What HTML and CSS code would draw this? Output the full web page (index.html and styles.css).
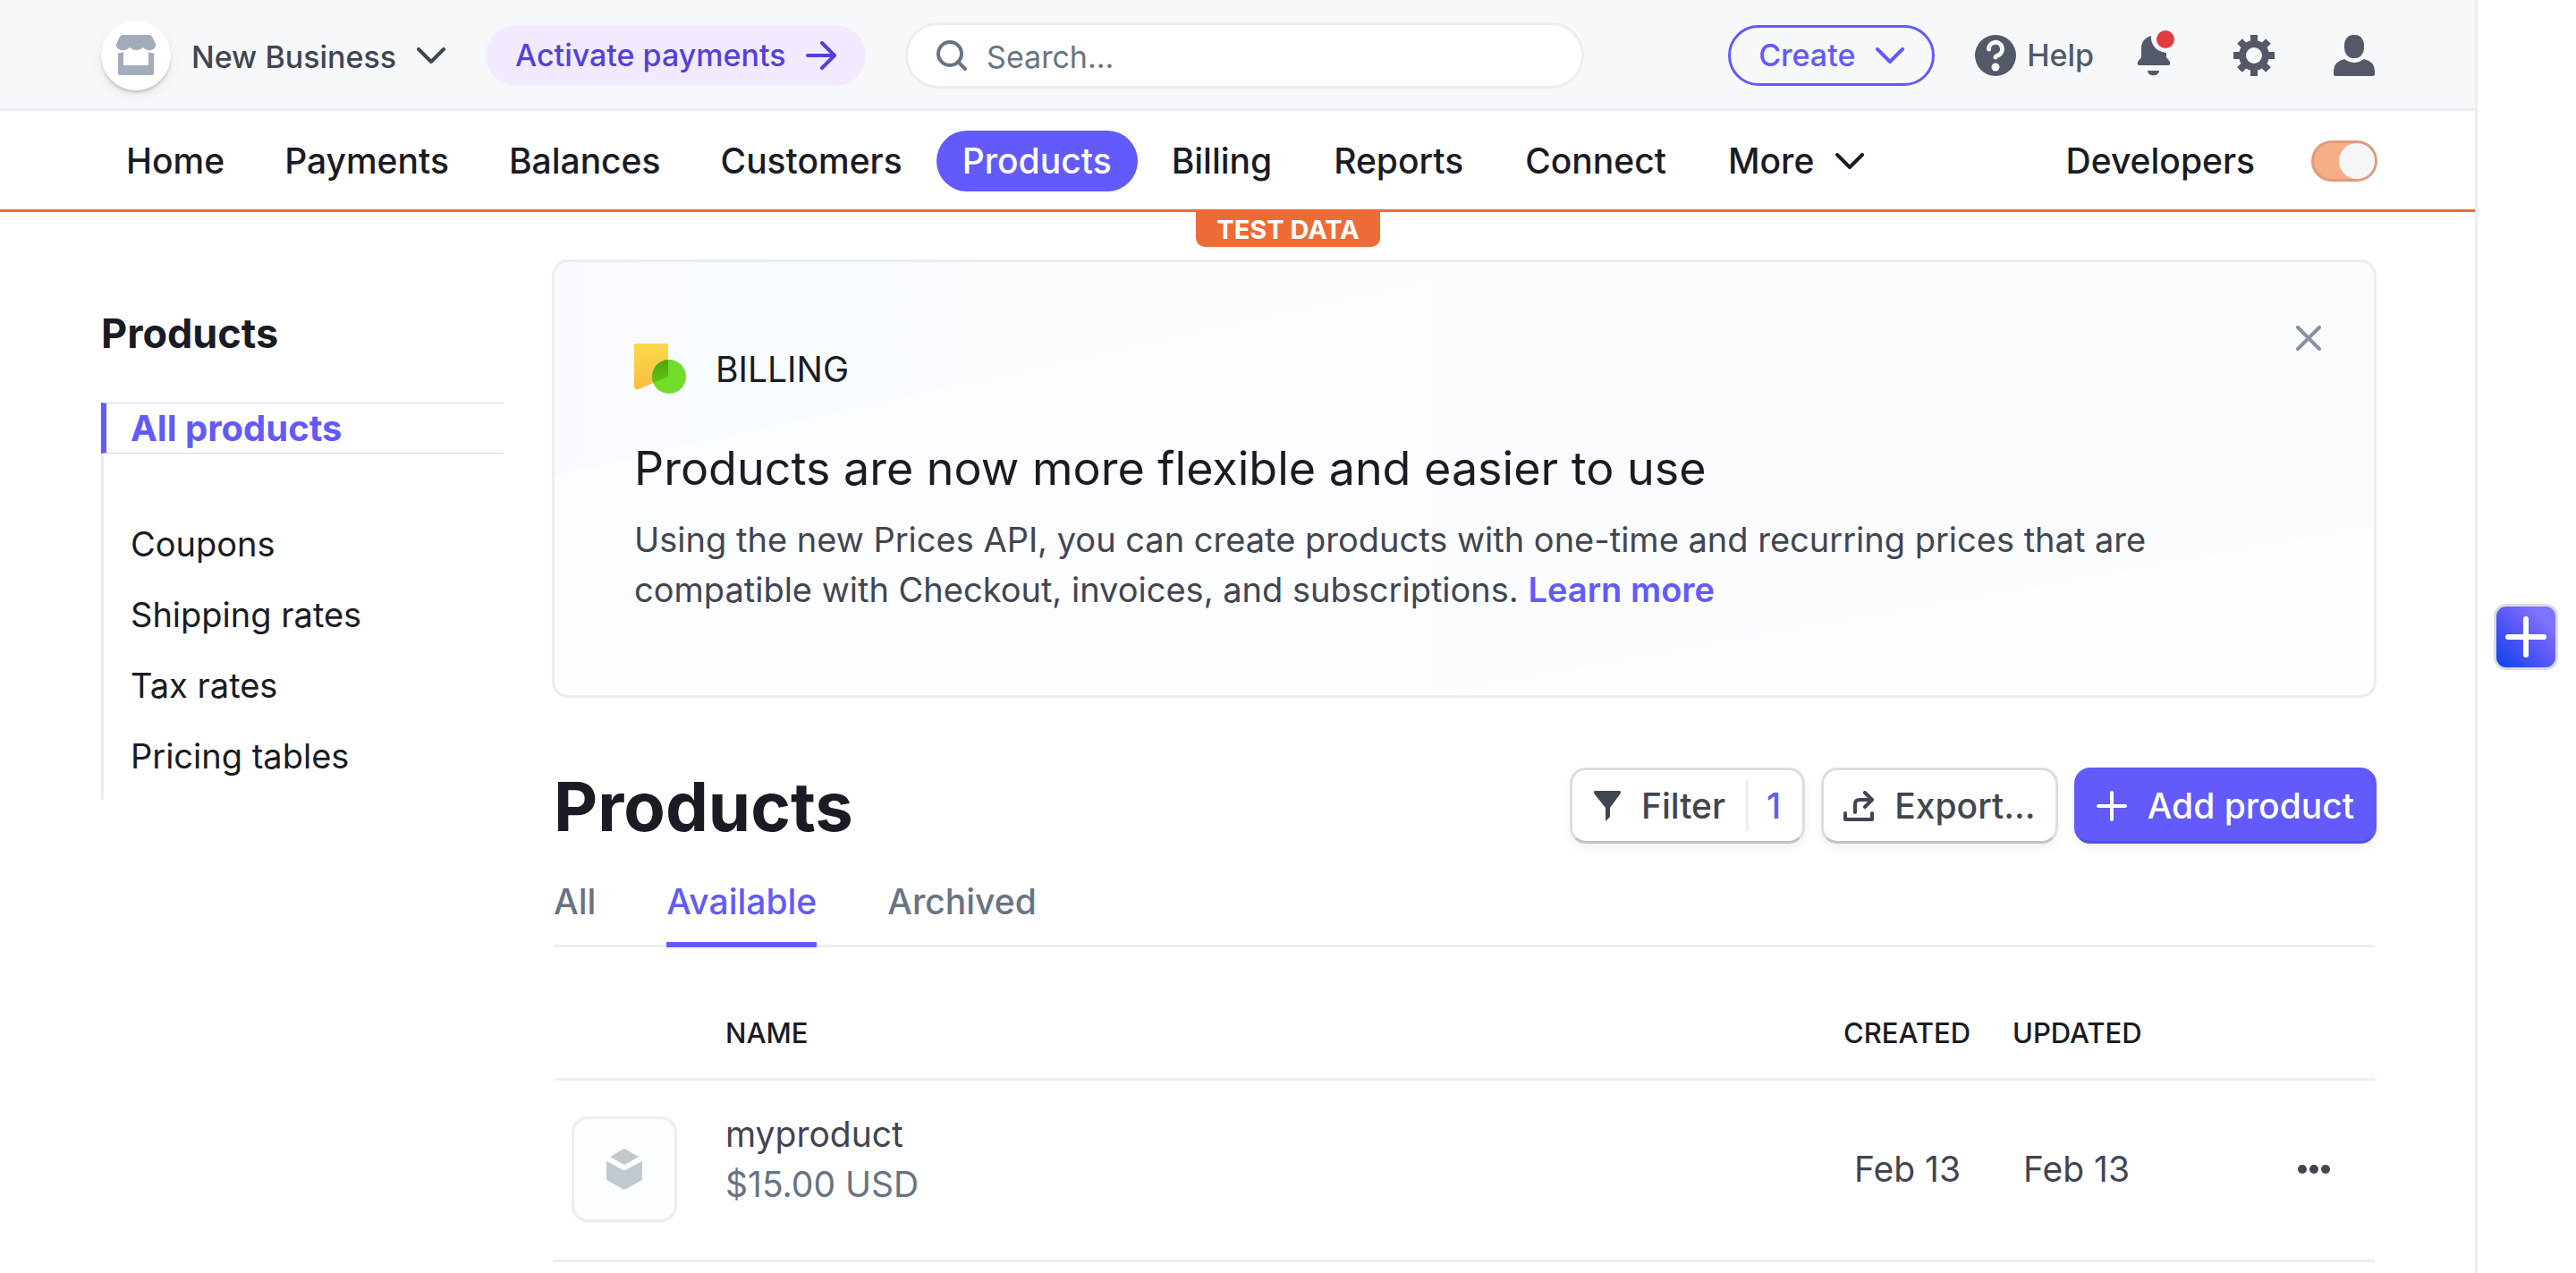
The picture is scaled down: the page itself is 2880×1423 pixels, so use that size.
FILE: index.html
```html
<!DOCTYPE html>
<html lang="en">
<head>
<meta charset="utf-8">
<title>Products</title>
<link rel="stylesheet" href="styles.css">
</head>
<body>
<div class="shell">
  <div class="app">
    <header class="topbar">
      <button class="account" type="button">
        <span class="avatar">
          <svg width="46" height="46" viewBox="0 0 46 46"><path d="M8 0h30q2 0 3 2l4 8c1 7-8 10-14 4-4 4-11 4-15 0C10 20 0 17 1 10L5 2q1-2 3-2z"/><path d="M3 20q3 1 6-1v15h28V19q3 2 6 1v23q0 2-2 2H5q-2 0-2-2z"/></svg>
        </span>
        <span class="account-name">New Business</span>
        <svg class="stroke" width="32" height="18" viewBox="0 0 32 18"><path d="M2 2l14 14L30 2"/></svg>
      </button>
      <a class="activate" href="#"><span>Activate payments</span>
        <svg class="stroke" width="34" height="32" viewBox="0 0 34 32"><path d="M2 16h30M18 2l14 14-14 14"/></svg>
      </a>
      <label class="search">
        <svg class="stroke" width="34" height="34" viewBox="0 0 34 34"><circle cx="15" cy="15" r="13"/><path d="M24 24l8 8"/></svg>
        <input type="text" placeholder="Search..." aria-label="Search">
      </label>
      <button class="create" type="button"><span>Create</span>
        <svg class="stroke" width="32" height="18" viewBox="0 0 32 18"><path d="M2 2l14 14L30 2"/></svg>
      </button>
      <a class="help" href="#">
        <svg width="46" height="46" viewBox="0 0 46 46"><circle cx="23" cy="23" r="23"/><path d="M15.500 16a7.500 7.500 0 1 1 11 6.500q-3.500 1.500-3.500 2.500" fill="none" stroke="#f6f8fa" stroke-width="5" stroke-linecap="round"/><circle cx="23" cy="36" r="4.500" fill="#f6f8fa"/></svg>
        <span>Help</span>
      </a>
      <button class="bell" type="button" aria-label="Notifications">
        <svg width="42" height="54" viewBox="0 0 42 54"><path d="M16 7C9 9 5 14 5 21v10l-4 5q-1 4 2 4h32q3 0 2-4l-4-5v-5C23 25 15 18 16 7zM12 46h13c0 7-13 7-13 0z"/><circle cx="32" cy="11" r="10" fill="#e03b41"/></svg>
      </button>
      <button class="gear" type="button" aria-label="Settings">
        <svg width="46" height="46" viewBox="0 0 46 46"><g fill="none" stroke="currentColor" stroke-width="8"><circle cx="23" cy="23" r="13"/><path d="M23 0v8M23 38v8M0 23h8M38 23h8M7 7l6 6M33 33l6 6M39 7l-6 6M13 33l-6 6"/></g></svg>
      </button>
      <button class="person" type="button" aria-label="Profile">
        <svg width="46" height="46" viewBox="0 0 46 46"><rect x="12" y="0" width="22" height="26" rx="10" ry="11"/><path d="M12 27q11 8 22 0 12 3 12 13v4q0 2-2 2H2q-2 0-2-2v-4q0-10 12-13z"/></svg>
      </button>
    </header>

    <nav class="nav">
      <a href="#">Home</a>
      <a href="#">Payments</a>
      <a href="#">Balances</a>
      <a href="#">Customers</a>
      <a class="current" href="#">Products</a>
      <a href="#">Billing</a>
      <a href="#">Reports</a>
      <a href="#">Connect</a>
      <a href="#">More
        <svg class="stroke" width="32" height="18" viewBox="0 0 32 18"><path d="M2 2l14 14L30 2"/></svg>
      </a>
      <a class="developers" href="#">Developers</a>
      <input class="toggle" type="checkbox" checked aria-label="Test mode">
      <span class="test-data">TEST DATA</span>
    </nav>

    <div class="content">
      <aside class="sidebar">
        <h2>Products</h2>
        <ul>
          <li class="selected"><a href="#">All products</a></li>
          <li><a href="#">Coupons</a></li>
          <li><a href="#">Shipping rates</a></li>
          <li><a href="#">Tax rates</a></li>
          <li><a href="#">Pricing tables</a></li>
        </ul>
      </aside>

      <main class="main">
        <section class="banner">
          <svg class="banner-art" viewBox="0 0 2034 484" preserveAspectRatio="none" aria-hidden="true">
            <defs><linearGradient id="wash" x1="0" x2="1" y1="0" y2="0"><stop offset="0" stop-color="#f9fafe"/><stop offset=".25" stop-color="#f8fcff"/><stop offset=".48" stop-color="#fafcfe"/></linearGradient></defs>
            <path d="M0 0h2034v484H0z" fill="#fcfdff"/>
            <path d="M0 0h984v18L0 238z" fill="url(#wash)"/>
            <path d="M984 0h1050v295L984 484z" fill="#fafcfe"/>
            <path d="M2034 295v189H984z" fill="#fefeff"/>
          </svg>
          <div class="banner-label">
            <svg width="58" height="58" viewBox="0 0 58 58">
              <defs><linearGradient id="sheet" x2="0" y2="1"><stop stop-color="#fbd84a"/><stop offset="1" stop-color="#fabd42"/></linearGradient><linearGradient id="overlap" x2="0" y2="1"><stop stop-color="#4fa308"/><stop offset="1" stop-color="#6ed023"/></linearGradient><clipPath id="sheet-clip"><path d="M2 0h34q2 0 2 2v35L5 51q-5 1-5-4V2q0-2 2-2z"/></clipPath></defs>
              <path d="M2 0h34q2 0 2 2v35L5 51q-5 1-5-4V2q0-2 2-2z" fill="url(#sheet)"/><circle cx="39" cy="37" r="19" fill="#72dc2b"/><circle cx="39" cy="37" r="19" fill="url(#overlap)" clip-path="url(#sheet-clip)"/>
            </svg>
            <span>BILLING</span>
          </div>
          <h3>Products are now more flexible and easier to use</h3>
          <p>Using the new Prices API, you can create products with one-time and recurring prices that are compatible with Checkout, invoices, and subscriptions. <a href="#">Learn more</a></p>
          <button class="close" type="button" aria-label="Dismiss">
            <svg class="stroke" width="28" height="28" viewBox="0 0 28 28"><path d="M2 2l24 24M26 2L2 26"/></svg>
          </button>
        </section>

        <div class="heading">
          <h1>Products</h1>
          <button class="btn" type="button">
            <svg width="32" height="34" viewBox="0 0 32 34"><path d="M3 0h28q2 1 0 4L20 19v10l-5 5V19L3 4q-2-3 0-4z"/></svg>
            <span>Filter</span><span class="count">1</span>
          </button>
          <button class="btn" type="button">
            <svg class="stroke" width="34" height="34" viewBox="0 0 34 34"><path d="M2 25v7h30v-7M13 24v-9q0-5 5-5h13M24 2l8 8-8 8"/></svg>
            <span>Export...</span>
          </button>
          <button class="btn primary" type="button">
            <svg class="stroke" width="34" height="34" viewBox="0 0 34 34"><path d="M17 2v30M2 17h30"/></svg>
            <span>Add product</span>
          </button>
        </div>

        <div class="tabs">
          <a href="#">All</a>
          <a class="active" href="#">Available</a>
          <a href="#">Archived</a>
        </div>

        <div class="listing">
          <table class="products">
            <colgroup><col class="c-thumb"><col><col class="c-date"><col class="c-date"><col class="c-more"></colgroup>
            <thead>
              <tr><th></th><th>NAME</th><th>CREATED</th><th>UPDATED</th><th></th></tr>
            </thead>
            <tbody>
              <tr>
                <td><span class="thumb"><svg width="40" height="46" viewBox="0 0 40 46"><path d="M18 1q2-1 4 0l14 8-14 8q-2 1-4 0L4 9z"/><path d="M0 14l17 9q3 2 6 0l17-9v19q0 2-2 3L22 45q-2 1-4 0L2 36q-2-1-2-3z"/></svg></span></td>
                <td class="name"><div>myproduct</div><div class="price">$15.00 USD</div></td>
                <td class="date">Feb 13</td>
                <td class="date">Feb 13</td>
                <td><button class="more" type="button" aria-label="More actions"><svg width="36" height="10" viewBox="0 0 36 10"><circle cx="5" cy="5" r="5"/><circle cx="18" cy="5" r="5"/><circle cx="31" cy="5" r="5"/></svg></button></td>
              </tr>
            </tbody>
          </table>
        </div>
      </main>
    </div>
  </div>
  <aside class="rail">
    <button type="button" aria-label="Add">
      <svg width="46" height="46" viewBox="0 0 46 46"><path d="M23 3v40M3 23h40"/></svg>
    </button>
  </aside>
</div>
</body>
</html>
```
FILE: styles.css
```css
* { box-sizing: border-box; }
body {
  margin: 0;
  background: #fff;
  color: #1a1b25;
  font: 400 39px/56px Inter, "Liberation Sans", sans-serif;
}
a { color: inherit; text-decoration: none; }
button { font: inherit; color: inherit; background: none; border: 0; padding: 0; display: flex; align-items: center; }
h1, h2, h3, p, ul { margin: 0; padding: 0; }
ul { list-style: none; }
svg { display: block; flex: none; fill: currentColor; }
svg.stroke { fill: none; stroke: currentColor; stroke-width: 4; stroke-linecap: round; stroke-linejoin: round; }

.shell { display: flex; min-height: 100vh; }
.app { flex: 1; min-width: 0; border-right: 3px solid #ebeef1; }

.topbar {
  display: flex; align-items: center;
  height: 124px; padding: 3px 112px 0 113px;
  background: #f6f8fa; border-bottom: 3px solid #ebeef1;
  color: #535969; font-size: 34px; font-weight: 500;
}
.account { gap: 23px; color: #414552; }
.account-name { padding-top: 4px; }
.avatar {
  display: grid; place-items: center; width: 78px; height: 78px;
  border-radius: 50%; background: #fff; color: #a3acba;
  box-shadow: 0 3px 3px rgba(0,0,0,.14), 0 6px 14px rgba(0,0,0,.07);
}
.activate {
  display: flex; align-items: center; justify-content: space-between;
  width: 425px; height: 68px; margin-left: 45px; padding: 0 33px;
  border-radius: 34px; background: #f2ebff; color: #5340db;
}
.search {
  display: flex; align-items: center; gap: 22px;
  flex: 1; height: 74px; margin-left: 44px; padding: 0 32px;
  border: 3px solid #ebeef1; border-radius: 37px; background: #fff; color: #687385;
}
.search input { flex: 1; min-width: 0; border: 0; outline: 0; padding: 4px 0 0; background: none; font: inherit; font-weight: 400; color: inherit; }
.search input::placeholder { color: #687385; opacity: 1; }
.create {
  justify-content: space-between; width: 231px; height: 68px; margin-left: 161px; padding: 0 31px;
  border: 3px solid #625afa; border-radius: 34px; color: #625afa;
}
.help { display: flex; align-items: center; gap: 12px; margin-left: 45px; }
.bell { margin: 0 0 4px 48px; }
.gear, .person { margin-left: 66px; }

.nav {
  position: relative; display: flex; align-items: center;
  height: 113px; padding: 2px 109px 0 112px;
  border-bottom: 3px solid #ed6b36; font-weight: 500;
}
.nav a { display: flex; align-items: center; gap: 24px; height: 68px; margin-right: 9px; padding: 0 29px; border-radius: 34px; }
.nav .current { background: #625afa; color: #fff; }
.nav .current ~ a { margin-right: 11px; }
.nav .current ~ .developers { margin-left: auto; margin-right: 34px; }
.toggle {
  appearance: none; display: flex; justify-content: flex-end; width: 74px; height: 46px; margin: 0;
  border: 3px solid #e09a7e; border-radius: 23px; background: #f5ae85;
}
.toggle::before { content: ""; width: 40px; height: 40px; border-radius: 50%; background: #f5f6f8; }
.test-data {
  position: absolute; top: 100%; left: calc(50vw - 103px); width: 206px; height: 42px;
  border-radius: 0 0 10px 10px; background: #ed6b36; color: #fff;
  font-size: 29px; line-height: 46px; font-weight: 700; text-align: center;
}

.content { display: flex; gap: 54px; padding: 53px 110px 0 113px; }
.sidebar { width: 450px; padding-top: 55px; }
.sidebar h2 { font-size: 45px; line-height: 56px; font-weight: 700; }
.sidebar ul { margin-top: 49px; padding-bottom: 10px; border-left: 3px solid #ebeef1; font-size: 38px; }
.sidebar li { height: 79px; padding: 12px 0 11px 30px; }
.sidebar .selected {
  height: 57px; margin: 0 0 61px -3px; padding: 0 0 0 27px;
  border: solid #d6d2fb; border-width: 1px 0; border-left: 6px solid #625afa;
  color: #625afa; font-size: 40px; font-weight: 700;
}

.main { flex: 1; min-width: 0; }
.banner {
  position: relative; height: 490px; padding: 91px 200px 0 89px;
  border: 3px solid #ebeef1; border-radius: 18px; overflow: hidden; color: #414552;
}
.banner-art { position: absolute; inset: 0; width: 100%; height: 100%; z-index: -1; }
.banner-label { display: flex; align-items: center; gap: 33px; color: #1a1b25; }
.banner h3 { margin-top: 46px; font-size: 52px; line-height: 72px; font-weight: 400; color: #1a1b25; }
.banner p { margin-top: 15px; font-size: 38px; }
.banner p a { color: #625afa; font-weight: 600; }
.close { position: absolute; top: 71px; right: 59px; color: #8792a2; }

.heading { display: flex; align-items: center; gap: 18px; margin-top: 78px; padding-left: 2px; }
.heading h1 { flex: 1; font-size: 76px; line-height: 84px; font-weight: 700; }
.btn {
  gap: 23px; height: 85px; padding: 0 22px; border: 3px solid #dcdde0; border-bottom-color: #c2c3c6;
  border-radius: 18px; color: #414552; font-weight: 500; box-shadow: 0 5px 10px rgba(0,0,0,.06);
}
.btn .count { height: 56px; padding: 0 2px 0 20px; border-left: 3px solid #ebeef1; color: #625afa; }
.btn.primary { border-color: #625afa; border-bottom-color: #564fdc; background: #625afa; color: #fff; }

.tabs { display: flex; gap: 79px; margin: 37px 2px 0; border-bottom: 3px solid #ebeef1; color: #687385; font-weight: 500; }
.tabs a { height: 76px; line-height: 56px; }
.tabs .active { margin-bottom: -3px; height: 79px; border-bottom: 6px solid #625afa; color: #625afa; }

.listing { padding: 0 2px; }
.products { width: 100%; table-layout: fixed; border-collapse: separate; border-spacing: 0; color: #414552; }
.c-thumb { width: 192px; }
.c-date { width: 189px; }
.c-more { width: 216px; }
.products th, .products td { padding: 0; text-align: left; border-bottom: 3px solid #ebeef1; }
.products th { height: 149px; padding-top: 46px; font-size: 31px; font-weight: 500; color: #1a1b25; }
.products td { height: 203px; padding-bottom: 2px; }
.products .name { padding-bottom: 24px; }
.price { color: #687385; }
.products .date { padding-left: 12px; }
.thumb { display: grid; place-items: center; width: 118px; height: 118px; margin-left: 20px; border: 3px solid #ebeef1; border-radius: 18px; background: #fcfdff; color: #c0c8d2; }
.more { margin-left: 130px; }

.rail { display: flex; align-items: center; justify-content: center; width: 110px; padding-right: 2px; }
.rail button {
  justify-content: center; width: 72px; height: 74px; border: 3px solid #d8dce3; border-radius: 14px;
  background: linear-gradient(45deg, #0a44e8, #625afa 55%, #7d74ff 80%);
}
.rail path { fill: none; stroke: #fff; stroke-width: 6; stroke-linecap: round; }
```
